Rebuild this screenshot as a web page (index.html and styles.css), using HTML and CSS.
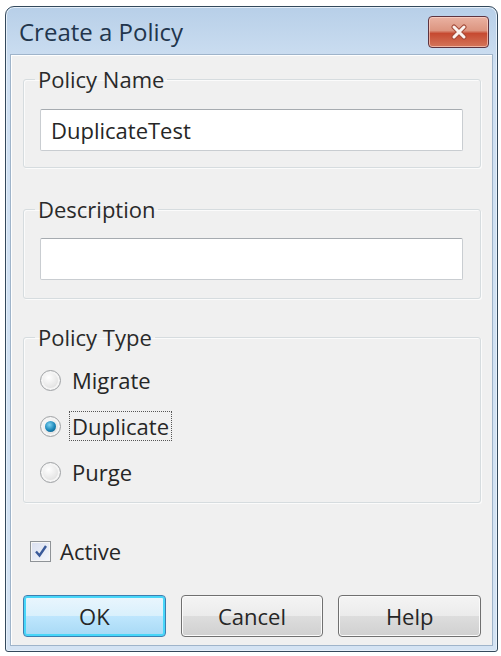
FILE: index.html
```html
<!DOCTYPE html>
<html lang="en">
<head>
    <meta charset="UTF-8">
    <title>Create a Policy</title>
    <link rel="stylesheet" href="styles.css">
</head>
<body>
    <div class="window">
        <!-- Title bar -->
        <div class="titlebar">
            <span class="title">Create a Policy</span>
            <button class="close" title="Close">
                <svg width="22" height="16" viewBox="0 0 22 16">
                    <path d="M6 3 L16 13 M16 3 L6 13" stroke="#a44a38" stroke-width="5" stroke-linecap="round"/>
                    <path d="M6 3 L16 13 M16 3 L6 13" stroke="#fbf3f0" stroke-width="3" stroke-linecap="round"/>
                </svg>
            </button>
        </div>

        <!-- Dialog body -->
        <form class="client">
            <fieldset class="group group-name">
                <legend>Policy Name</legend>
                <input class="field" type="text" value="DuplicateTest">
            </fieldset>

            <fieldset class="group group-desc">
                <legend>Description</legend>
                <input class="field" type="text" value="">
            </fieldset>

            <fieldset class="group group-type">
                <legend>Policy Type</legend>
                <label class="option"><span class="radio"></span><span class="option-text">Migrate</span></label>
                <label class="option"><span class="radio checked"></span><span class="option-text focus">Duplicate</span></label>
                <label class="option"><span class="radio"></span><span class="option-text">Purge</span></label>
            </fieldset>

            <label class="active-row">
                <span class="check">
                    <svg width="14" height="14" viewBox="0 0 14 14">
                        <path d="M2 7.5 L5.5 11.5 L12 2" fill="none" stroke="#3a5a9a" stroke-width="2.4"/>
                    </svg>
                </span>
                Active
            </label>

            <div class="buttons">
                <button type="button" class="btn default">OK</button>
                <button type="button" class="btn">Cancel</button>
                <button type="button" class="btn">Help</button>
            </div>
        </form>
    </div>
</body>
</html>
```

FILE: styles.css
```css
body {
    margin: 0;
    background: #ffffff;
    font-family: "Open Sans", "Noto Sans", sans-serif;
    color: #262626;
}
.window {
    width: 491px;
    height: 644px;
    margin: 6px 0 0 5px;
    border: 1px solid #34495c;
    border-radius: 9px 9px 3px 3px;
    background: linear-gradient(#b7cfe8, #cfe0f2 60px, #d4e3f3);
    display: flex;
    flex-direction: column;
    box-shadow: inset 0 0 0 1px #e6f0fa;
}
.titlebar {
    height: 47px;
    display: flex;
    align-items: center;
    padding: 0 8px 0 13px;
}
.title {
    font-size: 24px;
    color: #22354c;
    margin-top: 1px;
}
.close {
    margin-left: auto;
    margin-top: 2px;
    width: 61px;
    height: 32px;
    padding: 0;
    border: 1px solid #5d3440;
    border-radius: 4px;
    background: linear-gradient(#eab2a2, #dc9580 45%, #c64a31 55%, #d4765a);
    box-shadow: inset 0 0 0 1px rgba(255, 220, 210, 0.6);
    display: flex;
    align-items: center;
    justify-content: center;
}
.client {
    flex: 1;
    margin: 0 4px 5px 4px;
    background: #f0f0f0;
    border: 1px solid #9fb4ca;
    display: flex;
    flex-direction: column;
    padding: 11px 11px 0 12px;
    box-shadow: inset 1px 1px 0 #ffffff;
}
.group {
    margin: 0;
    padding: 0 17px 0 16px;
    border: 1px solid #d6dcdf;
    border-radius: 3px;
    box-shadow: inset 1px 1px 0 #fbfbfb, 1px 1px 0 #fbfbfb;
}
.group legend {
    font-size: 22px;
    line-height: 26px;
    padding: 0 3px;
    margin-left: -5px;
    color: #2a2a2a;
}
.group-name {
    padding-top: 17px;
    padding-bottom: 16px;
}
.group-desc {
    margin-top: 28px;
    padding-top: 16px;
    padding-bottom: 18px;
}
.group-type {
    margin-top: 25px;
    padding-top: 7px;
    padding-bottom: 7px;
}
.field {
    display: block;
    width: 100%;
    box-sizing: border-box;
    height: 42px;
    border: 1px solid #c9cdd1;
    border-top-color: #a6abb0;
    border-radius: 2px;
    background: #ffffff;
    font-family: inherit;
    font-size: 22px;
    color: #262626;
    padding: 0 10px;
    outline: none;
}
.option {
    display: flex;
    align-items: center;
    height: 46px;
    font-size: 22px;
}
.radio {
    width: 19px;
    height: 19px;
    border-radius: 50%;
    border: 1px solid #a0a3a6;
    background: radial-gradient(circle at 40% 35%, #ffffff, #e7e7e7 55%, #cfcfcf);
    box-shadow: inset 0 0 0 2px #f5f5f5;
    margin-right: 8px;
    position: relative;
}
.radio.checked::after {
    content: "";
    position: absolute;
    left: 4px;
    top: 4px;
    width: 11px;
    height: 11px;
    border-radius: 50%;
    background: radial-gradient(circle at 40% 35%, #7fd3f2, #1b86b8 55%, #0d4f73);
}
.option-text {
    padding: 0 2px;
    line-height: 28px;
    border: 1px dotted transparent;
}
.option-text.focus {
    border-color: #555555;
}
.active-row {
    display: flex;
    align-items: center;
    gap: 9px;
    font-size: 22px;
    margin-top: 33px;
    margin-left: 7px;
}
.check {
    width: 19px;
    height: 19px;
    border: 1px solid #8f9397;
    background: linear-gradient(135deg, #d9dff0, #f4f6fb);
    box-shadow: inset 0 0 0 1px #f6f6f6;
    display: flex;
    align-items: center;
    justify-content: center;
}
.buttons {
    display: flex;
    gap: 15px;
    margin-top: 29px;
}
.btn {
    width: 143px;
    height: 42px;
    border: 1px solid #707070;
    border-radius: 4px;
    background: linear-gradient(#f4f4f4, #ebebeb 50%, #dddddd 51%, #d0d0d0);
    box-shadow: inset 0 0 0 1px #fbfbfb;
    font-family: inherit;
    font-size: 22px;
    color: #262626;
}
.btn.default {
    border-color: #3c7fb1;
    background: linear-gradient(#eaf6fd, #d9f0fc 50%, #bee6fd 51%, #a7d9f5);
    box-shadow: inset 0 0 0 2px #48d6f9;
}
```
